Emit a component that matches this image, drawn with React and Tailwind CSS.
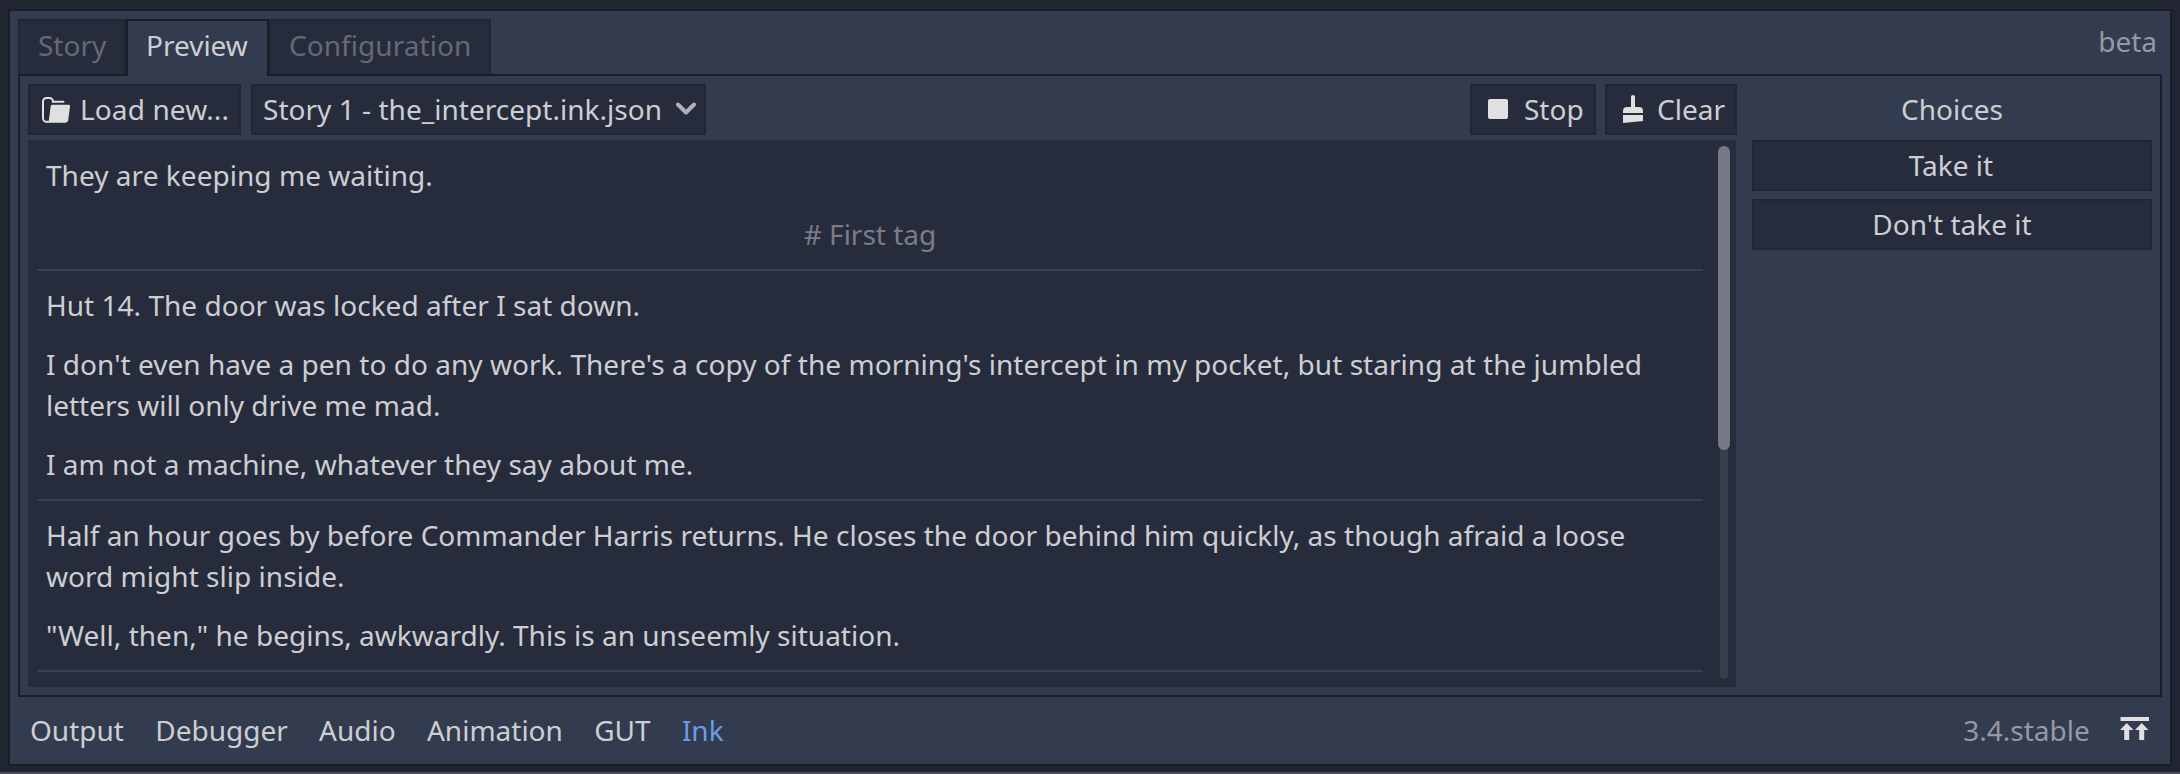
const Tab = ({ className, children }) => (
  <div className={`h-[55px] border-2 border-b-0 border-[#222632] bg-[#272c3c] pt-[5px] text-[#656975] ${className}`}>{children}</div>
);

const Button = ({ className, children }) => (
  <button className={`flex h-[51px] items-center border-2 border-[#222632] bg-[#272c3c] pb-px ${className}`}>{children}</button>
);

const Para = ({ children, className = "" }) => <p className={`leading-[41px] ${className}`}>{children}</p>;

const Rule = () => <div className="-ml-[9px] -mr-[10px] my-[14px] h-[2px] shrink-0 bg-[#3b404f]" />;

const FolderIcon = () => (
  <svg className="h-7 w-7 shrink-0" viewBox="0 0 28 28">
    <path d="M5.500 26.800H4.600A3.600 3.600 0 0 1 1 23.200V6.500A3.600 3.600 0 0 1 4.600 3H7.400A3.600 3.600 0 0 1 11 6.800H21.500" fill="none" stroke="#e0e0e0" strokeWidth="2" strokeLinecap="round" />
    <path d="M10.200 9.700H26.500q1.700 0 1.500 1.700L26.300 24.500a3.600 3.600 0 0 1-3.500 3.300H4.200c1.600-.3 2.400-1.400 2.800-3.500L8.600 11.700c.1-1.200.6-2 1.600-2z" fill="#e0e0e0" />
  </svg>
);

const ClearIcon = () => (
  <svg className="h-7 w-5 shrink-0" viewBox="0 0 20 28">
    <path d="M8 12V2a2 2 0 0 1 4 0v10h4a4 4 0 0 1 4 4v2H0v-2a4 4 0 0 1 4-4zM0 20h20v6L0 28z" fill="#e0e0e0" />
  </svg>
);

export default function App() {
  return (
    <div className="flex h-[774px] w-[2180px] flex-col border-b-2 border-[#4b4d5b] bg-[#212531] pb-[6px] pl-2 pr-2 pt-[9px] font-['Noto_Sans',sans-serif] text-[28px] leading-[38px] text-[#cdced2]">
      <div className="flex min-h-0 flex-1 flex-col border-2 border-[#191d27] bg-[#333b4f] px-2 pt-2">
        <div className="flex h-[55px] items-start">
          <Tab className="w-[108px] border-r-2 pl-[18px]">Story</Tab>
          <div className="z-10 h-[57px] w-[143px] border-2 border-b-0 border-[#191d27] bg-[#333b4f] pl-[18px] pt-[5px]">Preview</div>
          <Tab className="w-[222px] pl-[18px] tracking-[0.05px]">Configuration</Tab>
          <div className="ml-auto pr-[5px] pt-[3px] text-[#9599a4]">beta</div>
        </div>
        <div className="flex h-[623px] gap-4 border-2 border-[#191d27] p-2">
          <div className="flex w-[1708px] flex-col gap-[5px]">
            <div className="-mr-px flex">
              <Button className="w-[213px] gap-[10px] pl-3 tracking-[0.12px]"><FolderIcon />Load new...</Button>
              <Button className="ml-[10px] w-[455px] justify-between pl-[10px] pr-2 tracking-[0.03px]">
                Story 1 - the_intercept.ink.json
                <svg className="h-5 w-5" viewBox="0 0 20 20"><path d="M2 5.500l8 8 8-8" fill="none" stroke="#b0b2b9" strokeWidth="4" strokeLinecap="round" strokeLinejoin="round" /></svg>
              </Button>
              <Button className="ml-auto w-[126px] gap-4 pl-4"><span className="h-5 w-5 rounded-[2px] bg-[#e0e0e0]" />Stop</Button>
              <Button className="ml-[9px] w-[132px] gap-[14px] pl-4"><ClearIcon />Clear</Button>
            </div>
            <div className="flex h-[547px] justify-between bg-[#272c3c]">
              <div className="flex w-[1675px] flex-col pl-[18px] pr-[10px] pt-[15px]">
                <Para className="tracking-[0.04px]">They are keeping me waiting.</Para>
                <Para className="mt-[18px] pl-px text-center text-[#7a7d87]"># First tag</Para>
                <Rule />
                <Para className="tracking-[0.02px]">Hut 14. The door was locked after I sat down.</Para>
                <Para className="mt-[18px] whitespace-nowrap tracking-[0.036px]">I don't even have a pen to do any work. There's a copy of the morning's intercept in my pocket, but staring at the jumbled<br /><span className="tracking-normal">letters will only drive me mad.</span></Para>
                <Para className="mt-[18px] tracking-[0.02px]">I am not a machine, whatever they say about me.</Para>
                <Rule />
                <Para className="whitespace-nowrap tracking-[0.03px]">Half an hour goes by before Commander Harris returns. He closes the door behind him quickly, as though afraid a loose<br />word might slip inside.</Para>
                <Para className="mt-[18px] tracking-[0.02px]">"Well, then," he begins, awkwardly. This is an unseemly situation.</Para>
                <Rule />
              </div>
              <div className="mr-[6px] flex w-3 flex-col items-center pt-[6px]">
                <div className="z-10 h-[304px] w-3 shrink-0 rounded-full bg-[#757983]" />
                <div className="-mt-2 h-[237px] w-2 shrink-0 rounded-b-full bg-[#393e4b]" />
              </div>
            </div>
          </div>
          <div className="flex w-[400px] flex-col">
            <div className="h-14 pt-[6px] text-center">Choices</div>
            <Button className="justify-center pr-[2px]">Take it</Button>
            <Button className="mt-2 justify-center">Don't take it</Button>
          </div>
        </div>
        <div className="flex h-[67px] items-center gap-[31.3px] pb-px pl-3">
          <span>Output</span><span>Debugger</span><span>Audio</span><span>Animation</span><span>GUT</span>
          <span className="text-[#699ce8]">Ink</span>
          <span className="ml-auto text-[#9599a4]">3.4.stable</span>
          <svg className="-ml-px mr-[13px] h-7 w-[29px]" viewBox="0 0 29 28"><path d="M.5 1H29v4H.5zM6.700 7l6.800 7H9.200v10h-5V14H0zM21.700 7l6.800 7H24.200v10h-5V14H15z" fill="#e0e0e0" /></svg>
        </div>
      </div>
    </div>
  );
}
